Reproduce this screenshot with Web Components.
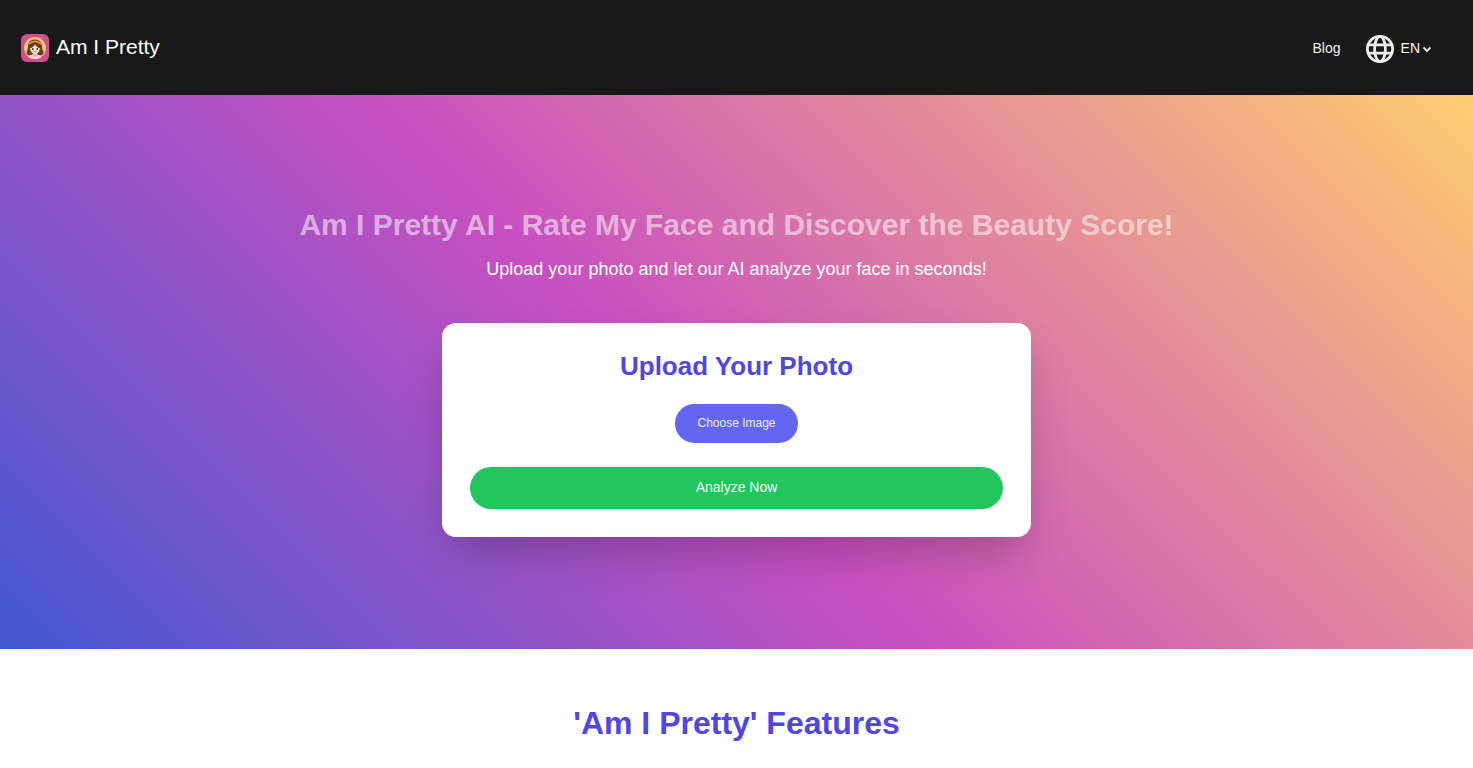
<!DOCTYPE html>
<html lang="en">
<head>
<meta charset="utf-8">
<meta name="viewport" content="width=device-width, initial-scale=1">
<title>Am I Pretty</title>
<style>
	body {
		margin: 0;
		background: #fff;
		color: #fff;
		font-family: "Liberation Sans", Arial, sans-serif;
		font-size: 14px;
		line-height: 20px;
		--indigo: #4f46e5;
	}
</style>
</head>
<body>
<pretty-header>
	<pretty-logo slot="brand">Am I Pretty</pretty-logo>
	<pretty-link href="#blog">Blog</pretty-link>
	<pretty-language></pretty-language>
</pretty-header>
<main>
	<pretty-hero>
		<span slot="title">Am I Pretty AI - Rate My Face and Discover the Beauty Score!</span>
		<span slot="subtitle">Upload your photo and let our AI analyze your face in seconds!</span>
		<pretty-upload>Upload Your Photo</pretty-upload>
	</pretty-hero>
	<pretty-features>'Am I Pretty' Features</pretty-features>
</main>

<script>
function attach(element, html) {
	const template = document.createElement('template');
	template.innerHTML = html;
	element.attachShadow({ mode: 'open' });
	element.shadowRoot.appendChild(template.content.cloneNode(true));
}

class PrettyHeader extends HTMLElement {

	constructor() {
		super();

		attach(this, `
			<style>
				:host {
					display: block;
					background: #181818;
					color: #f3f3f3;
				}

				header {
					display: flex;
					align-items: center;
					justify-content: space-between;
					padding: 33px 41px 32px 21px;
				}

				nav {
					display: flex;
					align-items: center;
					gap: 25px;
				}
			</style>
			<header>
				<slot name="brand"></slot>
				<nav aria-label="Main"><slot></slot></nav>
			</header>
		`);
	}

}

class PrettyLogo extends HTMLElement {

	constructor() {
		super();

		attach(this, `
			<style>
				:host {
					display: block;
					font-size: 21px;
					line-height: 28px;
				}

				a {
					display: flex;
					align-items: center;
					gap: 7px;
					color: #fff;
					text-decoration: none;
				}

				span {
					padding-bottom: 2px;
				}
			</style>
			<a href="#">
				<svg width="28" height="28" viewBox="0 0 56 56" aria-hidden="true">
					<defs><clipPath id="face"><circle cx="28" cy="28" r="22"/></clipPath></defs>
					<rect width="56" height="56" rx="12" fill="#d0508b"/>
					<circle cx="28" cy="28" r="22" fill="#f7c27c"/>
					<g clip-path="url(#face)">
						<path d="M28 11c-9 0-14 6-14 15 0 6-3 8-3 12 1 5 8 6 12 3h10c4 3 11 2 12-3 0-4-3-6-3-12 0-9-5-15-14-15z" fill="#6b3a20"/>
						<path d="M13 52c1-7 6-11 12-11h6c6 0 11 4 12 11z" fill="#f6cfdc"/>
						<path d="M24 36h8v7q-4 4-8 0z" fill="#f0b592"/>
						<path d="M18 27q0-8 10-8t10 8c0 8-5 13-10 13s-10-5-10-13z" fill="#ffe3cb"/>
						<path d="M17 29c-1-9 4-14 11-14s12 5 11 14c-5-1-8-4-11-8-3 4-6 7-11 8z" fill="#6b3a20"/>
						<path d="M16 20q12-11 24 0" fill="none" stroke="#eaa03c" stroke-width="3"/>
						<ellipse cx="23.500" cy="30" rx="1.600" ry="2.200" fill="#35211d"/>
						<ellipse cx="32.500" cy="30" rx="1.600" ry="2.200" fill="#35211d"/>
						<path d="M26 35q2 2 4 0" fill="none" stroke="#c7435b" stroke-width="1.600" stroke-linecap="round"/>
					</g>
				</svg>
				<span><slot></slot></span>
			</a>
		`);
	}

}

class PrettyLink extends HTMLElement {

	constructor() {
		super();

		attach(this, `
			<style>
				:host {
					display: block;
				}

				a {
					color: inherit;
					text-decoration: none;
				}
			</style>
			<a><slot></slot></a>
		`);
	}

	connectedCallback() {
		this.shadowRoot.querySelector('a').setAttribute('href', this.getAttribute('href') || '#');
	}

}

class PrettyLanguage extends HTMLElement {

	constructor() {
		super();

		attach(this, `
			<style>
				:host {
					display: block;
				}

				div {
					display: flex;
					align-items: center;
				}

				label {
					display: flex;
					padding-top: 2px;
					margin-right: 7px;
				}

				select {
					appearance: none;
					field-sizing: content;
					border: 0;
					padding: 0;
					margin: 0;
					background: none;
					color: inherit;
					font: inherit;
				}

				option {
					color: #181818;
				}

				.chevron {
					margin-left: 2px;
					padding-top: 1px;
					pointer-events: none;
				}
			</style>
			<div>
				<label for="language" aria-label="Language">
					<svg width="28" height="28" viewBox="0 0 28 28" fill="none" stroke="#ededed" stroke-width="2.8" aria-hidden="true">
						<circle cx="14" cy="14" r="12.6"/>
						<ellipse cx="14" cy="14" rx="5.4" ry="12.6"/>
						<path d="M2.4 9.9h23.2M2.4 18.1h23.2"/>
					</svg>
				</label>
				<select id="language">
					<option value="en">EN</option>
				</select>
				<svg class="chevron" width="10" height="10" viewBox="0 0 10 10" fill="none" stroke="#ededed" stroke-width="1.8" aria-hidden="true">
					<path d="M1.5 3.5 5 7l3.5-3.5"/>
				</svg>
			</div>
		`);
	}

}

class PrettyHero extends HTMLElement {

	constructor() {
		super();

		attach(this, `
			<style>
				:host {
					display: block;
					background: linear-gradient(45deg, #4158d0 0%, #c850c0 46%, #ffcc70 100%);
				}

				section {
					display: flex;
					flex-direction: column;
					align-items: center;
					padding: 112px 28px;
					text-align: center;
				}

				h1 {
					margin: 0 0 14px;
					color: rgba(255, 255, 255, .55);
					font-size: 30px;
					line-height: 36px;
				}

				p {
					margin: 0 0 42px;
					font-size: 18px;
					line-height: 24px;
				}
			</style>
			<section>
				<h1><slot name="title"></slot></h1>
				<p><slot name="subtitle"></slot></p>
				<slot></slot>
			</section>
		`);
	}

}

class PrettyUpload extends HTMLElement {

	constructor() {
		super();

		attach(this, `
			<style>
				:host {
					display: block;
					box-sizing: border-box;
					width: 100%;
					max-width: 589px;
					padding: 28px;
					border-radius: 14px;
					background: #fff;
					box-shadow: 0 22px 44px -10px rgba(0, 0, 0, .25);
				}

				form {
					display: flex;
					flex-direction: column;
					align-items: center;
				}

				h2 {
					margin: 0 0 22px;
					color: var(--indigo);
					font-size: 26px;
					line-height: 31px;
				}

				button {
					border: 0;
					border-radius: 21px;
					color: #fff;
					font: inherit;
					cursor: pointer;
				}

				.choose {
					margin-bottom: 24px;
					padding: 9px 22px 10px;
					background: #6366f1;
					color: #eeeeff;
					font-size: 12px;
				}

				.analyze {
					width: 100%;
					padding: 10px 28px 12px;
					background: #22c55e;
					color: #effff4;
				}
			</style>
			<form>
				<h2><slot></slot></h2>
				<input type="file" accept="image/*" aria-label="Photo" hidden>
				<button class="choose" type="button">Choose Image</button>
				<button class="analyze" type="submit">Analyze Now</button>
			</form>
		`);

		this.form = this.shadowRoot.querySelector('form');
		this.input = this.shadowRoot.querySelector('input');
		this.chooseButton = this.shadowRoot.querySelector('.choose');
	}

	connectedCallback() {
		this.chooseButton.addEventListener('click', () => this.input.click());
		this.form.addEventListener('submit', (e) => e.preventDefault());
	}

}

class PrettyFeatures extends HTMLElement {

	constructor() {
		super();

		attach(this, `
			<style>
				:host {
					display: block;
					padding: 56px 28px 0;
					color: var(--indigo);
					text-align: center;
				}

				h2 {
					margin: 0;
					font-size: 32px;
					line-height: 36px;
				}
			</style>
			<h2><slot></slot></h2>
		`);
	}

}

customElements.define('pretty-header', PrettyHeader);
customElements.define('pretty-logo', PrettyLogo);
customElements.define('pretty-link', PrettyLink);
customElements.define('pretty-language', PrettyLanguage);
customElements.define('pretty-hero', PrettyHero);
customElements.define('pretty-upload', PrettyUpload);
customElements.define('pretty-features', PrettyFeatures);
</script>
</body>
</html>
